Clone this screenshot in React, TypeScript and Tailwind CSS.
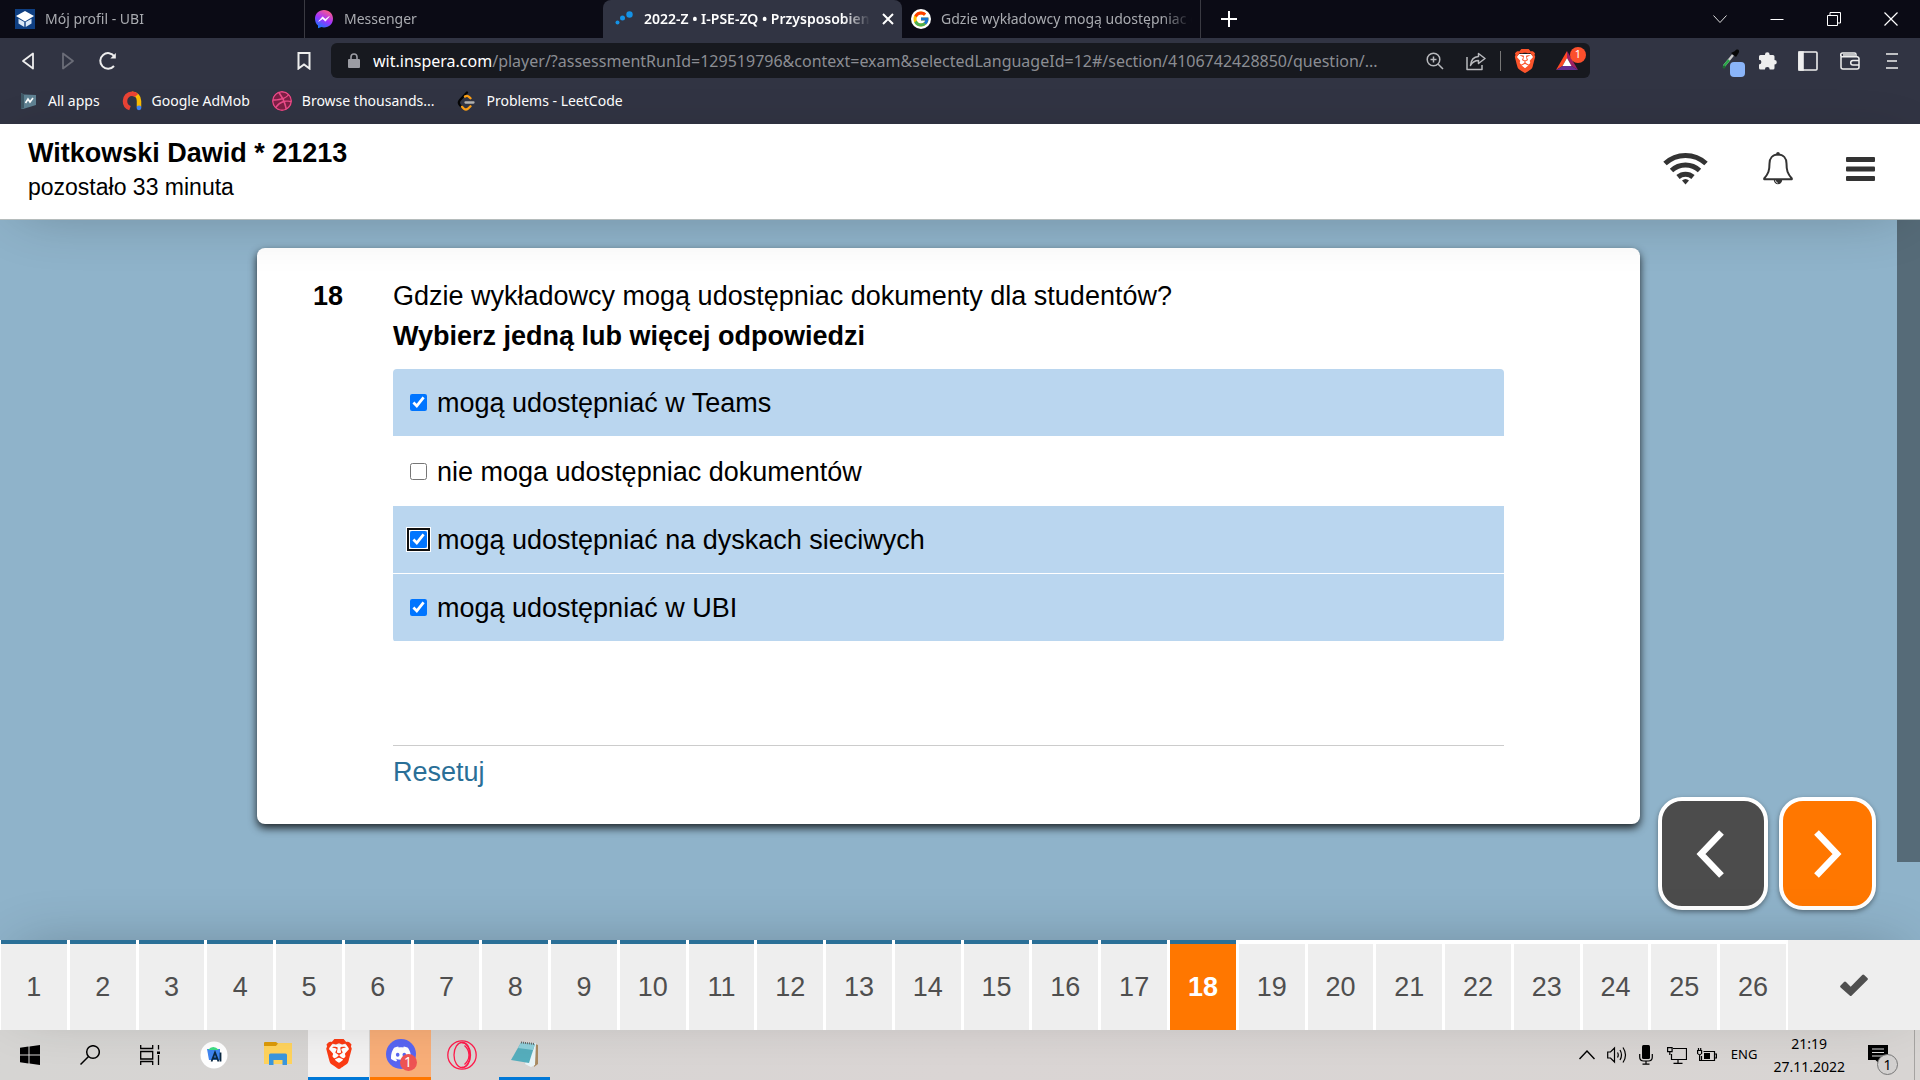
import React, { useState } from "react";
import { FcGoogle } from "react-icons/fc";
import { SiBrave, SiDiscord, SiDribbble } from "react-icons/si";

type IconProps = { className?: string };

const UbiIcon = () => (
  <svg viewBox="0 0 20 20" className="size-5 shrink-0">
    <rect width="20" height="20" fill="#0f3f82" />
    <path d="M10 2 19 7l-9 5.500L1 7z" fill="#fff" />
    <path d="M3.500 9.700 9.300 13v5L3.500 14.500zM16.500 9.700 10.700 13v5l5.800-3.500z" fill="#dce9f7" />
  </svg>
);

const MessengerIcon = () => (
  <svg viewBox="0 0 20 20" className="size-5 shrink-0">
    <defs>
      <linearGradient id="msg" x1="0.2" y1="1" x2="0.7" y2="0">
        <stop offset="0" stopColor="#0a7cff" />
        <stop offset="0.5" stopColor="#a033ff" />
        <stop offset="1" stopColor="#ff5c87" />
      </linearGradient>
    </defs>
    <path d="M10 1c5.200 0 9 3.800 9 8.700s-3.800 8.700-9 8.700c-.9 0-1.800-.1-2.600-.4L4 19.300v-2.700C2.200 15 1 12.600 1 9.700 1 4.800 4.800 1 10 1z" fill="url(#msg)" />
    <path d="m4.700 12.300 3.900-4.500 2.700 2.500 4-2.800-3.900 4.700-2.700-2.500z" fill="#fff" stroke="#fff" strokeWidth=".6" />
  </svg>
);

const InsperaIcon = () => (
  <svg viewBox="0 0 20 20" className="size-5 shrink-0" fill="#1492e6">
    <circle cx="3.500" cy="13.500" r="2" />
    <circle cx="8.500" cy="9" r="2.500" />
    <circle cx="15.500" cy="5.500" r="3.200" />
  </svg>
);

const BackIcon = ({ className }: IconProps) => (
  <svg viewBox="0 0 16 18" className={className} fill="none" stroke="currentColor" strokeWidth="1.800" strokeLinejoin="round">
    <path d="M13 1.500v15L3 9z" />
  </svg>
);

const ReloadIcon = () => (
  <svg viewBox="0 0 20 20" className="size-5" fill="none" stroke="#eee" strokeWidth="2">
    <path d="M16 15a7.800 7.800 0 1 1 .5-9.500" />
    <path d="M17.800 2v5.500h-5.500z" fill="#eee" stroke="none" />
  </svg>
);

const AllAppsIcon = () => (
  <svg viewBox="0 0 18 20" className="h-5 w-[18px] shrink-0">
    <path d="M1 2l3 1.500L16 4v10L3 18 1 18z" fill="#5f8293" />
    <path d="M1 2l3 1.500V17l-3 1z" fill="#3f5967" />
    <path d="m5.500 12 2.500-4 2 3 3-4" stroke="#fff" strokeWidth="1.600" fill="none" />
  </svg>
);

const AdMobIcon = () => (
  <svg viewBox="0 0 20 20" className="size-5 shrink-0" fill="none" strokeWidth="4.500">
    <path d="M10 2.800c4.500 0 7 3.200 7 7.200v6" stroke="#fbbc04" />
    <path d="M8 17.200A7.500 7.500 0 0 1 3 10c0-4 3-7.200 7-7.200 2 0 3.500.7 4.500 1.700" stroke="#ea4335" />
    <circle cx="17" cy="16.800" r="2.400" fill="#4285f4" />
  </svg>
);

const LeetCodeIcon = () => (
  <svg viewBox="0 0 20 20" className="size-5 shrink-0" fill="none" strokeWidth="2.300" strokeLinecap="round">
    <path d="M11 1.500 4 9c-1.500 1.700-1.500 3.500 0 5.200l1.500 1.500" stroke="#050505" />
    <path d="M9 5.500c1.500-1 3-.8 4.300.6l1.200 1.200M6 15.800l1.800 1.800c1.500 1.200 3.500 1 4.700-.3l2-2" stroke="#ffa116" />
    <path d="M9.500 11.500h8" stroke="#b3b3b3" />
  </svg>
);

const BatIcon = () => (
  <svg viewBox="0 0 22 20" className="h-5 w-[22px]">
    <path d="M11 0 0 19l6.500-4L11 7z" fill="#ff4724" />
    <path d="M11 0 22 19l-6.500-4L11 7z" fill="#9e1f63" />
    <path d="M0 19h22l-6.500-4h-9z" fill="#662d91" />
    <path d="m11 7 4.500 8h-9z" fill="#fff" />
  </svg>
);

const WifiIcon = () => (
  <svg viewBox="0 0 45 33" className="h-[33px] w-[45px]" fill="none" stroke="#333" strokeWidth="5">
    <path d="M2 11.500a30 30 0 0 1 41 0" />
    <path d="M8.500 18.500a20.500 20.500 0 0 1 28 0" />
    <path d="M15 25a11.500 11.500 0 0 1 15 0" />
    <path d="M19 28.500q3.500-3 7 0L22.500 32.500z" fill="#333" stroke="none" />
  </svg>
);

const BellIcon = () => (
  <svg viewBox="0 0 30 33" className="h-[33px] w-[30px]" fill="none" stroke="#333" strokeWidth="2">
    <path d="M15 2.500c-5.500 0-8.500 4-8.500 9 0 7-1 10-5.300 15v.8h27.600v-.8c-4.300-5-5.300-8-5.300-15 0-5-3-9-8.500-9z" strokeLinejoin="round" />
    <circle cx="15" cy="1.800" r="1.800" fill="#333" stroke="none" />
    <path d="M10.800 28h8.400a4.200 4.200 0 0 1-8.400 0z" fill="#333" stroke="none" />
    <path d="M12.500 28.500c.2 1.300 1 2.200 2.200 2.500" stroke="#fff" strokeWidth="1" />
  </svg>
);

const LionIcon = ({ className, color }: { className: string; color: string }) => (
  <span className={className} style={{ color }}>
    <svg viewBox="0 0 24 24" className="absolute inset-0 size-full">
      <path d="M6 5h12l2.500 3-2 10-6.500 5-6.500-5-2-10z" fill="#fff" />
    </svg>
    <SiBrave className="relative size-full" />
  </span>
);

const tabs = [
  { title: "Mój profil - UBI", icon: <UbiIcon /> },
  { title: "Messenger", icon: <MessengerIcon /> },
  { title: "2022-Z • I-PSE-ZQ • Przysposobienie", icon: <InsperaIcon />, active: true },
  { title: "Gdzie wykładowcy mogą udostępniac dok", icon: <FcGoogle className="size-5 shrink-0 rounded-full bg-white p-px" /> },
];

function TabBar() {
  return (
    <div className="flex h-[38px] bg-[#0b0b15] text-[#a9abb0]">
      {tabs.map((t, i) => (
        <div
          key={t.title}
          className={
            t.active
              ? "flex w-[299px] shrink-0 items-center rounded-t-lg bg-[#313443] pl-[11px] pr-2 font-semibold text-white"
              : i === 1
                ? "flex w-[298px] shrink-0 items-center pl-[9px] pr-2"
                : i === 0
                  ? "flex w-[305px] shrink-0 items-center border-r border-[#3a3a42] pl-[15px] pr-2"
                  : "flex w-[299px] shrink-0 items-center border-r border-[#3a3a42] pl-[9px] pr-2"
          }
        >
          {t.icon}
          <button className="ml-2.5 min-w-0 flex-1 overflow-hidden whitespace-nowrap text-left text-sm [mask-image:linear-gradient(to_right,black_88%,transparent)]">
            {t.title}
          </button>
          {t.active && (
            <button aria-label="Close tab" className="ml-3">
              <svg viewBox="0 0 12 12" className="size-3" stroke="#fff" strokeWidth="2"><path d="M1 1l10 10M11 1 1 11" /></svg>
            </button>
          )}
        </div>
      ))}
      <button aria-label="New tab" className="ml-5">
        <svg viewBox="0 0 16 16" className="size-4" stroke="#fff" strokeWidth="2"><path d="M8 0v16M0 8h16" /></svg>
      </button>
      <div className="ml-auto flex items-center">
        <button aria-label="Search tabs" className="flex w-[57px] justify-center">
          <svg viewBox="0 0 14 14" className="size-3.5" fill="none" stroke="#ddd"><path d="m.5 3.500 6.500 7 6.500-7" /></svg>
        </button>
        <button aria-label="Minimize" className="flex w-[57px] justify-center">
          <svg viewBox="0 0 14 14" className="size-3.5" stroke="#fff"><path d="M.5 7.500h13" /></svg>
        </button>
        <button aria-label="Restore" className="flex w-[57px] justify-center">
          <svg viewBox="0 0 14 14" className="size-3.5" fill="none" stroke="#fff"><path d="M.5 3.500h10v10H.5zM3 3.500v-3h10.500v10.500h-3" /></svg>
        </button>
        <button aria-label="Close" className="flex w-[58px] justify-center">
          <svg viewBox="0 0 14 14" className="size-3.5" stroke="#fff" strokeWidth="1.200"><path d="m.5.5 13 13M13.500.5l-13 13" /></svg>
        </button>
      </div>
    </div>
  );
}

function Toolbar() {
  return (
    <div className="flex h-[45px] items-center bg-[#313443]">
      <button aria-label="Back" className="ml-5 text-[#eee]"><BackIcon className="h-[18px] w-4" /></button>
      <button aria-label="Forward" className="ml-6 text-[#6b6d78]"><BackIcon className="h-[18px] w-4 rotate-180" /></button>
      <button aria-label="Reload" className="ml-[22px]"><ReloadIcon /></button>
      <button aria-label="Bookmark" className="ml-[179px]">
        <svg viewBox="0 0 14 18" className="h-[18px] w-3.5" fill="none" stroke="#eee" strokeWidth="2"><path d="M1.500 1h11v15.500L7 12.500l-5.500 4z" /></svg>
      </button>
      <div className="ml-5 flex h-[35px] min-w-0 flex-1 items-center rounded-md bg-[#17191f] pl-[17px] pr-1 text-base">
        <svg viewBox="0 0 12 15" className="h-[15px] w-3 shrink-0"><rect y="6" width="12" height="9" rx="1" fill="#9b9ca3" /><path d="M3 7V4a3 3 0 0 1 6 0v3" fill="none" stroke="#9b9ca3" strokeWidth="1.600" /></svg>
        <div className="ml-[13px] min-w-0 flex-1 overflow-hidden whitespace-nowrap text-[#8b8d93]">
          <span className="text-white">wit.inspera.com</span>/player/?assessmentRunId=129519796&amp;context=exam&amp;selectedLanguageId=12#/section/4106742428850/question/...
        </div>
        <button aria-label="Zoom" className="ml-3">
          <svg viewBox="0 0 18 18" className="size-[18px]" fill="none" stroke="#b8b9bd" strokeWidth="1.500"><circle cx="7.500" cy="7.500" r="6.300" /><path d="m12 12 5 5M7.500 4.500v6M4.500 7.500h6" /></svg>
        </button>
        <button aria-label="Share" className="ml-[22px]">
          <svg viewBox="0 0 20 20" className="size-5" fill="none" stroke="#b8b9bd" strokeWidth="1.500" strokeLinejoin="round"><path d="M1 6v12.500h15V14" /><path d="M12.500 2.500 19 7.500l-6.500 5v-3C9 9.500 6.500 11 4.500 14.500 5 9 8 5.700 12.500 5.500z" /></svg>
        </button>
        <span className="ml-3.5 h-5 w-px bg-[#777]" />
        <button aria-label="Brave Shields" className="ml-3"><LionIcon className="relative block size-6" color="#fb542b" /></button>
        <button aria-label="Brave Rewards" className="relative ml-[19px] mr-2">
          <BatIcon />
          <span className="absolute -top-1 left-3.5 flex size-4 items-center justify-center rounded-full bg-[#fb4f2c] text-[11px] text-white">1</span>
        </button>
      </div>
      <div className="ml-[132px] mr-5 flex items-center">
        <button aria-label="Color picker" className="relative h-7 w-6">
          <svg viewBox="0 0 24 28" className="h-7 w-6"><path d="M2 19 11 8" stroke="#ccc" strokeWidth="2.500" /><path d="M2 19l5-6" stroke="#2ba84a" strokeWidth="2.500" /><path d="m9 6 5 4 2-3c3-4-1-6-3-3z" fill="#060606" /><circle cx="2" cy="20" r="1.500" fill="#1c6b30" /></svg>
          <span className="absolute -bottom-0.5 left-2 size-[15px] rounded-sm bg-[#8ab4f8]" />
        </button>
        <button aria-label="Extensions" className="ml-3">
          <svg viewBox="0 0 20 20" className="size-5" fill="#eee"><path d="M7 3.500a2.300 2.300 0 0 1 4.600 0V4H15a1.500 1.500 0 0 1 1.500 1.500V9a2.300 2.300 0 1 1 0 4.600V17a1.500 1.500 0 0 1-1.500 1.500h-3.300a2.400 2.400 0 0 0-4.800 0H2.500A1.500 1.500 0 0 1 1 17v-3.500a2.400 2.400 0 0 0 0-4.800V5.500A1.500 1.500 0 0 1 2.500 4H7z" /></svg>
        </button>
        <button aria-label="Sidebar" className="ml-5">
          <svg viewBox="0 0 20 20" className="size-5" fill="none" stroke="#eee" strokeWidth="1.600"><rect x="1" y="1" width="18" height="18" rx="1" /><path d="M1 1h4v18H1z" fill="#eee" /></svg>
        </button>
        <button aria-label="Wallet" className="ml-[22px]">
          <svg viewBox="0 0 20 18" className="h-[18px] w-5" fill="none" stroke="#eee" strokeWidth="1.500"><path d="M16 5V2.500A1.500 1.500 0 0 0 14.500 1H2.500a1.500 1.500 0 0 0 0 3.800H17A2 2 0 0 1 19 7v8a2 2 0 0 1-2 2H3a2 2 0 0 1-2-2V2.500M19 8.500h-6a2.300 2.300 0 0 0 0 4.600h6M3 3h12" /></svg>
        </button>
        <button aria-label="Browser menu" className="ml-[26px] mr-0.5">
          <svg viewBox="0 0 12 16" className="h-4 w-3" stroke="#eee" strokeWidth="1.600"><path d="M0 1h12M1 8h10M0 15h12" /></svg>
        </button>
      </div>
    </div>
  );
}

function Bookmarks() {
  return (
    <nav className="flex h-[41px] items-center gap-[22px] bg-[#313443] pb-1.5 pl-5 text-sm text-white">
      <a href="#apps" className="flex items-center gap-2.5"><AllAppsIcon />All apps</a>
      <a href="#admob" className="flex items-center gap-2.5"><AdMobIcon />Google AdMob</a>
      <a href="#dribbble" className="flex items-center gap-2.5">
        <SiDribbble className="size-5 rounded-full bg-[#7d1f45] text-[#ea4c89]" />Browse thousands...
      </a>
      <a href="#leetcode" className="flex items-center gap-2.5"><LeetCodeIcon />Problems - LeetCode</a>
    </nav>
  );
}

const options = [
  { label: "mogą udostępniać w Teams", on: true },
  { label: "nie moga udostępniac dokumentów", on: false },
  { label: "mogą udostępniać na dyskach sieciwych", on: true },
  { label: "mogą udostępniać w UBI", on: true },
];

function Question() {
  const [checked, setChecked] = useState(options.map((o) => o.on));
  return (
    <section className="mx-auto flex w-full max-w-[1383px] rounded-lg bg-white pb-8 pl-14 pr-34 pt-7 text-[27px] leading-10 shadow-[0_4px_8px_rgba(0,0,0,0.8)]">
      <div className="w-20 shrink-0 font-bold">18</div>
      <div className="min-w-0 flex-1">
        <p>Gdzie wykładowcy mogą udostępniac dokumenty dla studentów?</p>
        <p className="font-bold">Wybierz jedną lub więcej odpowiedzi</p>
        <div className="mt-[13px] overflow-hidden rounded">
          {options.map((o, i) => (
            <label
              key={o.label}
              className={
                checked[i]
                  ? "flex h-[68px] items-center border-b border-white bg-[#bad6ef] bg-clip-padding pl-[17px]"
                  : "flex h-[69px] items-center border-y border-white pl-[17px]"
              }
            >
              <input
                type="checkbox"
                checked={checked[i]}
                onChange={() => setChecked(checked.map((c, k) => (k === i ? !c : c)))}
                className={
                  i === 2
                    ? "mr-2.5 size-[17px] rounded-[1px] outline-2 outline-offset-1 outline-[#101010] ring-4 ring-white accent-[#0075ff]"
                    : "mr-2.5 size-[17px] accent-[#0075ff]"
                }
              />
              {o.label}
            </label>
          ))}
        </div>
        <div className="mt-[103px] border-t border-[#ccc] pt-1.5">
          <button className="text-[#2a6f97]" onClick={() => setChecked(options.map(() => false))}>Resetuj</button>
        </div>
      </div>
    </section>
  );
}

function QuestionNav() {
  return (
    <nav className="relative z-10 flex h-[90px] bg-white shadow-[0_-8px_60px_-20px_rgba(0,0,0,0.3)]">
      <div className="flex min-w-0 flex-1">
        {Array.from({ length: 26 }, (_, i) => i + 1).map((n) => (
          <div key={n} className="flex min-w-0 flex-1 pl-px pr-0.5">
            <button
              className={
                n === 18
                  ? "w-full border-t-4 border-[#2a6f97] bg-[#ff7700] text-[27px] font-bold text-white"
                  : n < 18
                    ? "w-full border-t-4 border-[#2a6f97] bg-[#eee] text-[27px] text-[#4f4f4f]"
                    : "w-full border-t-4 border-white bg-[#eee] text-[27px] text-[#4f4f4f]"
              }
            >
              {n}
            </button>
          </div>
        ))}
      </div>
      <button aria-label="Finish" className="flex w-[132px] items-center justify-center bg-[#eee]">
        <svg viewBox="0 0 28 22" className="h-[22px] w-7" fill="#4f4f4f"><path d="M.6 11.500 4 8q1-1 2 0l4.700 4.700L22.200.9q1-1 2 0l3.200 3.200q1 1 0 2L11.700 21.400q-1 1-2 0L.6 13.400q-1-1 0-1.900z" /></svg>
      </button>
    </nav>
  );
}

function Taskbar() {
  return (
    <footer className="flex h-[50px] items-stretch bg-linear-to-r from-[#d6d5d3] via-[#dad5d4] to-[#d8d5d3] text-black">
      <button aria-label="Start" className="flex w-[60px] items-center justify-center">
        <svg viewBox="0 0 20 20" className="size-5"><path d="M0 2.800 8.500 1.500v8H0zM9.500 1.400 20 0v9.500H9.500zM0 10.500h8.500v8L0 17.300zM9.500 10.500H20V20L9.500 18.600z" /></svg>
      </button>
      <button aria-label="Search" className="flex w-[60px] items-center justify-center">
        <svg viewBox="0 0 20 20" className="size-5" fill="none" stroke="#000" strokeWidth="1.500"><circle cx="13" cy="7" r="6.300" /><path d="M8.500 11.500.5 19.500" /></svg>
      </button>
      <button aria-label="Task view" className="flex w-[60px] items-center justify-center">
        <svg viewBox="0 0 20 20" className="size-5" fill="none" stroke="#000" strokeWidth="1.300"><path d="M.7 0v3.500h12V0M.7 6.500h12v7.500h-12zM.7 20v-3.500h12V20M18.500 0v4.500M18.500 10v10" /><path d="M17 6.500h3v2.500h-3z" fill="#000" stroke="none" /></svg>
      </button>
      <button aria-label="Android Studio" className="flex w-[68px] items-center justify-center">
        <svg viewBox="0 0 28 28" className="size-7"><circle cx="14" cy="14" r="13.500" fill="#fff" /><path d="M7 8h13v11H9z" fill="#3f85f0" /><path d="M8 9q5-6 11 0z" fill="#3ddc84" /><path d="m11.500 20.500 3.500-9 3.500 9M12.500 17.500h5M20.500 11.500v9" stroke="#0b2942" strokeWidth="1.800" fill="none" /></svg>
      </button>
      <button aria-label="File Explorer" className="flex w-[60px] items-center justify-center pb-1">
        <svg viewBox="0 0 28 24" className="h-6 w-7"><path d="M0 5h12l2-3h14v21H0z" fill="#ffd35c" /><path d="M0 2q0-1 1-1h11l2 1.500-2 2.500H0z" fill="#dd9a07" /><path d="M5 24V14q0-1.500 1.500-1.500h15Q23 12.500 23 14v10h-4.500v-5h-9v5z" fill="#3a96dd" /></svg>
      </button>
      <button aria-label="Brave" className="flex w-[61px] items-center justify-center border-b-3 border-[#0078d7] bg-[#f2f1f1]">
        <LionIcon className="relative block size-[30px]" color="#fb3b14" />
      </button>
      <button aria-label="Discord" className="ml-px flex w-[61px] items-center justify-center border-b-3 border-[#ff7700] bg-[#f8ae78]">
        <span className="relative flex size-[30px] items-center justify-center rounded-full bg-[#5865f2]">
          <SiDiscord className="size-5 text-white" />
          <span className="absolute -bottom-0.5 left-3.5 flex size-[17px] items-center justify-center rounded-full bg-[#ee5454] text-sm text-white">1</span>
        </span>
      </button>
      <button aria-label="Opera" className="flex w-[61px] items-center justify-center">
        <svg viewBox="0 0 30 30" className="size-[30px]" fill="none" stroke="#ff1b4b" strokeWidth="1.300"><circle cx="15" cy="15" r="14.200" /><ellipse cx="15" cy="15" rx="8" ry="12.500" /><path d="M15 2.500C20 2.500 23.500 8 23.500 15S20 27.500 15 27.500M17.500 5.500q4.500 4 4.500 9.500t-4.500 9.500" /></svg>
      </button>
      <button aria-label="Notepad" className="ml-[7px] flex w-[51px] items-center justify-center border-b-3 border-[#0078d7]">
        <svg viewBox="0 0 28 28" className="size-7"><path d="m24 4 3 1v19l-4 3z" fill="#a98a62" /><path d="M22 3h3l-1 22-4 2-6-3z" fill="#e9f4f7" /><path d="M10 2.500 24 4l-6 19L0 20z" fill="#55aebd" /><path d="M10 2.500 24 4l-2 6L7 8z" fill="#8fd0db" /><path d="M10 2.500 24 4" stroke="#666" strokeDasharray="1 1" strokeWidth="2" /></svg>
      </button>
      <div className="ml-auto flex items-center">
        <button aria-label="Hidden icons"><svg viewBox="0 0 16 10" className="h-2.5 w-4" fill="none" stroke="#000" strokeWidth="1.400"><path d="m.5 9 7.500-8 7.500 8" /></svg></button>
        <button aria-label="Volume" className="ml-3"><svg viewBox="0 0 20 18" className="h-[18px] w-5" fill="none" stroke="#000" strokeWidth="1.200"><path d="M.7 6h2.800L7.500 2v14l-4-4H.7zM10.500 6.500q1.500 2.500 0 5M13 4q3 5 0 10M16 1.500q5 7.500 0 15" /></svg></button>
        <button aria-label="Microphone" className="ml-3"><svg viewBox="0 0 14 20" className="h-5 w-3.5"><rect x="3" width="8" height="14" rx="1.500" /><path d="M.7 9v3q0 4 4 4h4.600q4 0 4-4V9M7 16v3M3.500 19.200h7" fill="none" stroke="#000" strokeWidth="1.200" /></svg></button>
        <button aria-label="Network" className="ml-3.5"><svg viewBox="0 0 20 17" className="h-[17px] w-5" fill="none" stroke="#000" strokeWidth="1.200"><path d="M6 1.500h13.500v11H4.500V7M11 12.500v3.500M6.500 16.300h9M.6.6h4.500v4H.6zM2.800 5v3" /></svg></button>
        <button aria-label="Battery" className="ml-2.5"><svg viewBox="0 0 20 15" className="h-[15px] w-5" fill="none" stroke="#000" strokeWidth="1.200"><path d="M6.500 3.500h11v9h-13V8M18 6h1.400v4H18M.6 2.500h4v3q-2 2.500-4 0zM1.500 2.500V0M3.700 2.500V0M2.600 7v5.500h2" /><path d="M7 5h6v6H7z" fill="#000" stroke="none" /></svg></button>
        <span className="ml-3.5 text-[13px]">ENG</span>
        <div className="ml-4 text-center text-sm leading-[23px]">
          <div>21:19</div>
          <div>27.11.2022</div>
        </div>
        <button aria-label="Notifications" className="relative ml-[23px] mr-[26px]">
          <svg viewBox="0 0 20 20" className="size-5"><path d="M0 0h20v15h-8v4.500L7.500 15H0z" /><path d="M4 4h12M4 7.500h12M4 11h12" stroke="#ddd" strokeWidth="1.200" /></svg>
          <span className="absolute left-[9px] top-[9px] flex size-[21px] items-center justify-center rounded-full border border-[#777] bg-[#d2d0cf] text-sm">1</span>
        </button>
        <span className="mr-[5px] h-[50px] w-px bg-[#a5a3a1]" />
      </div>
    </footer>
  );
}

export default function App() {
  return (
    <div className="flex min-h-screen flex-col overflow-hidden bg-white font-['Liberation_Sans',Arial,sans-serif] text-black">
      <div className="font-['Noto_Sans',sans-serif]">
        <TabBar />
        <Toolbar />
        <Bookmarks />
      </div>
      <header className="relative z-10 flex h-24 items-center justify-between border-b border-[#b5bcbc] bg-white pl-7 pr-[45px] shadow-[0_8px_60px_-20px_rgba(0,0,0,0.3)]">
        <div className="pb-1.5">
          <h1 className="text-[27px] leading-9 font-bold">Witkowski Dawid * 21213</h1>
          <p className="text-[23px] leading-8">pozostało 33 minuta</p>
        </div>
        <div className="flex items-center pb-1.5">
          <button aria-label="Connection"><WifiIcon /></button>
          <button aria-label="Alerts" className="ml-[55px]"><BellIcon /></button>
          <button aria-label="Menu" className="ml-[53px]">
            <svg viewBox="0 0 29 24" className="h-6 w-[29px]" fill="#333"><rect width="29" height="5" rx="1" /><rect y="9.500" width="29" height="5" rx="1" /><rect y="19" width="29" height="5" rx="1" /></svg>
          </button>
        </div>
      </header>
      <main className="relative flex flex-1 bg-[#8fb3ca]">
        <div className="min-w-0 flex-1 pt-7">
          <Question />
        </div>
        <div className="h-[642px] w-[23px] shrink-0 bg-[#566b78]" />
        <div className="absolute bottom-[30px] right-11 flex gap-[11px]">
          <button aria-label="Previous question" className="flex h-[113px] w-[110px] items-center justify-center rounded-3xl border-4 border-white bg-[#4c4c4c] shadow-[0_2px_5px_rgba(0,0,0,0.4)]">
            <svg viewBox="0 0 28 48" className="mr-1.5 h-12 w-7" fill="none" stroke="#fff" strokeWidth="6.500"><path d="M25.500 2.500 5 24l20.500 21.500" /></svg>
          </button>
          <button aria-label="Next question" className="flex h-[113px] w-[97px] items-center justify-center rounded-3xl border-4 border-white bg-[#ff7700] shadow-[0_2px_5px_rgba(0,0,0,0.4)]">
            <svg viewBox="0 0 28 48" className="h-12 w-7" fill="none" stroke="#fff" strokeWidth="6.500"><path d="M2.500 2.500 23 24 2.500 45.500" /></svg>
          </button>
        </div>
      </main>
      <QuestionNav />
      <div className="font-['Noto_Sans',sans-serif]">
        <Taskbar />
      </div>
    </div>
  );
}
